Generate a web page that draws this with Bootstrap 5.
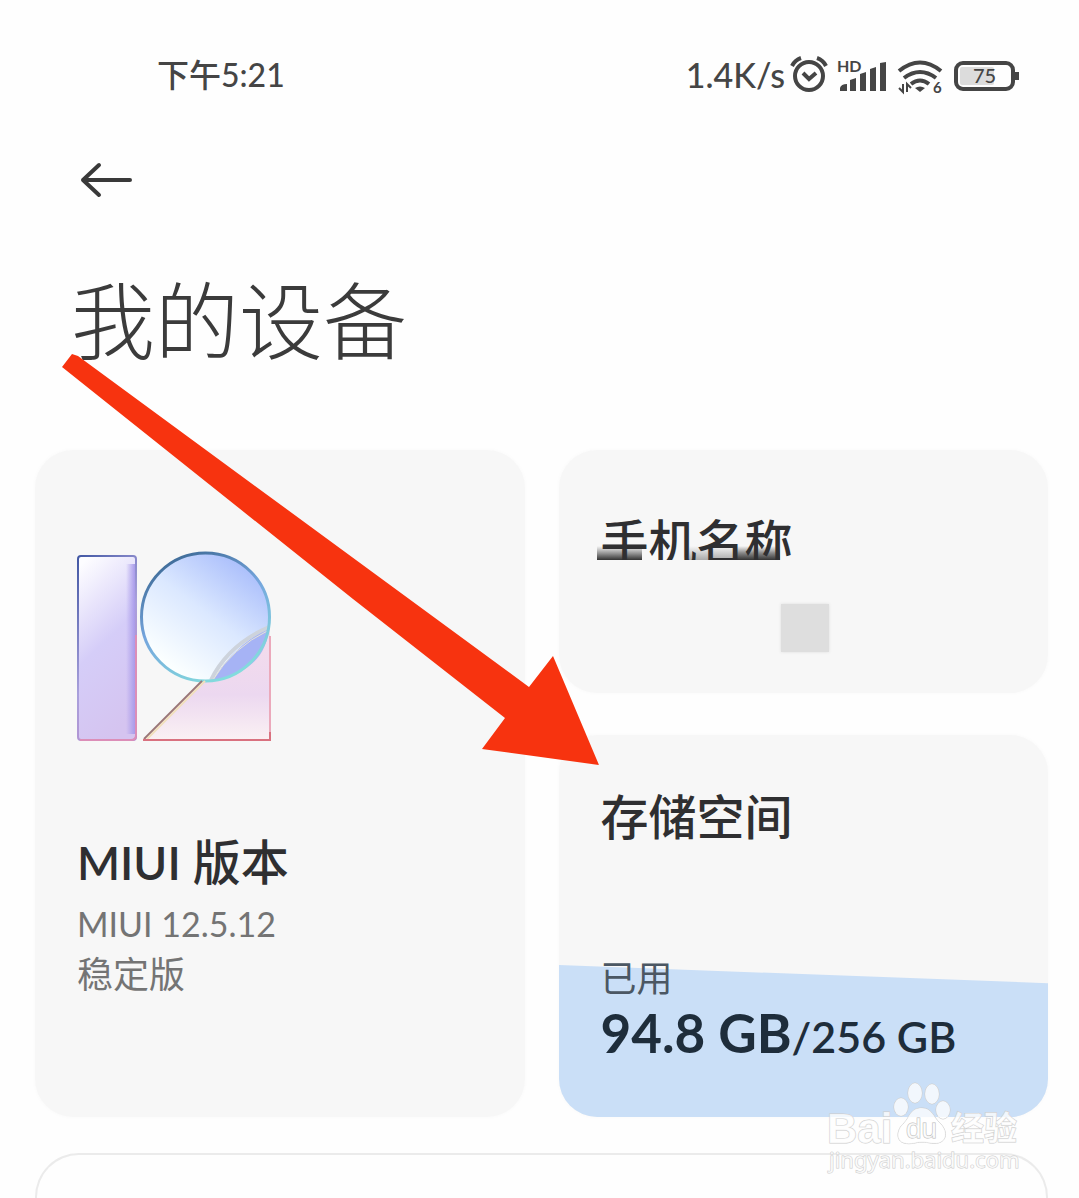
<!DOCTYPE html>
<html lang="zh-CN">
<head>
<meta charset="utf-8">
<meta name="viewport" content="width=device-width, initial-scale=1">
<title>我的设备</title>
<link href="https://cdn.jsdelivr.net/npm/bootstrap@5.3.0/dist/css/bootstrap.min.css" rel="stylesheet">
<style>
  body { background: #fefefe; color: #2f2f31; font-family: Lato, "Noto Sans CJK SC", sans-serif; }
  .device-page { padding: 0 31px 0 35px; overflow: hidden; }
  .status-bar { padding: 55px 27px 0 122px; font-size: 32px; line-height: 40px; color: #454545; font-weight: 500; }
  .status-bar svg { display: block; }
  .net-speed { font-size: 34px; }
  .back-btn { margin: 62px 0 0 41px; padding: 0; width: 58px; height: 44px; line-height: 0; }
  .page-title { margin: 68px 0 0 36px; font-size: 84px; line-height: 96px; font-weight: 300; font-family: "Noto Sans CJK SC", sans-serif; color: #3b3b3b; }
  .tiles { --bs-gutter-x: 34px; margin-top: 85px; }
  .tile-stack { gap: 42px; }
  .tile { border: 0; border-radius: 38px; background: #f7f7f7; box-shadow: 0 0 4px #f9f9f9; padding: 0 42px; }
  .tile-version { padding-top: 100px; }
  .tile-name { min-height: 243px; padding-top: 62px; }
  .tile-storage { min-height: 382px; padding-top: 52px; overflow: hidden; }
  .tile-title { font-size: 48px; line-height: 60px; font-weight: 500; margin: 0; }
  .tile-title .latin { font-size: 46px; font-weight: 600; }
  .tile-version .tile-title { margin-top: 89px; margin-bottom: 5px; }
  .tile-sub { font-size: 36px; line-height: 50px; color: #747474; margin: 0; }
  .tile-sub .latin { font-size: 34px; }
  .smear-title { position: relative; isolation: isolate; }
  .smear-title::before, .smear-title::after { content: ""; position: absolute; left: -4px; width: 200px; }
  .smear-title::before { z-index: -1; top: 34px; height: 14px;
    background:
      linear-gradient(#3330, #999 50%, #333) 0 0 / 45px 14px no-repeat,
      linear-gradient(#aaa0, #aaa) 92px 0 / 45px 14px no-repeat,
      linear-gradient(#3330, #888 50%, #333) 137px 0 / 46px 14px no-repeat; }
  .smear-title::after { top: 48px; height: 14px; background: #f7f7f7; }
  .name-mask { width: 48px; height: 48px; background: #dedede; margin: 32px 0 0 180px; box-shadow: 0 0 3px #dedede; }
  .used-fill { left: 0; right: 0; bottom: 0; height: 152px; background: #cadff7; clip-path: polygon(0 0, 100% 12%, 100% 100%, 0 100%); }
  .used-label { margin-top: 106px; font-size: 36px; line-height: 50px; color: #4b5763; }
  .used-value { font-size: 43px; line-height: 60px; font-weight: 600; color: #1e2d3b; }
  .used-value strong { font-size: 53px; font-weight: 700; }
  .next-panel { margin-top: 36px; min-height: 43px; border: 2px solid #ebebeb; border-bottom: 0; border-radius: 44px 44px 0 0; }
  .pointer-arrow { left: 55px; top: 345px; pointer-events: none; }
  .watermark { right: 51px; bottom: 18px; pointer-events: none; }
</style>
</head>
<body>
<main class="device-page position-relative d-flex flex-column min-vh-100">
  <header class="status-bar d-flex justify-content-between align-items-center">
    <span>下午5:21</span>
    <div class="d-flex align-items-center">
      <span class="net-speed">1.4K/s</span>
      <svg class="ms-1" width="40" height="40" viewBox="788 54 40 40" fill="none" stroke="#454545" stroke-width="4" role="img" aria-label="闹钟"><circle cx="808" cy="75" r="14"/><path d="M802 72l6 6 7-6M791 65q3-6 9-8M816 57q6 2 9 8" /></svg>
      <svg class="ms-2" width="52" height="40" viewBox="836 54 52 40" fill="#454545" role="img" aria-label="信号"><text x="836" y="71" font-size="16" font-weight="700">HD</text><path d="M839 90v-3q1-4 7-4v7zM849 90V79l6-2v13zM859 90V73l6-2v19zM869 90V68l6-2v24zM879 90V62l6-1v29z"/></svg>
      <svg class="ms-2" width="48" height="40" viewBox="896 54 48 40" fill="none" stroke="#454545" stroke-width="4" role="img" aria-label="无线网络"><path d="M898 70q21-17 42 0M903 77q16-12 32 0M910 83q9-7 18 0"/><path d="M914 87q5-3 10 0l-5 4z" fill="#454545" stroke="none"/><path d="M902 83v8l-4-4M906 91v-8l4 4" stroke-width="2"/><text x="932" y="92" font-size="15" font-weight="700" fill="#454545" stroke="none">6</text></svg>
      <svg class="ms-2" width="68" height="40" viewBox="954 54 68 40" fill="none" role="img" aria-label="电量 75"><rect x="957" y="62" width="57" height="26" rx="7" stroke="#454545" stroke-width="4"/><rect x="961" y="66" width="34" height="18" rx="2" fill="#dcdcdc"/><path d="M1018 71v8" stroke="#454545" stroke-width="4"/><text x="974" y="82" font-size="20" fill="#454545">75</text></svg>
    </div>
  </header>

  <button type="button" class="btn back-btn" aria-label="返回">
    <svg width="58" height="44" viewBox="78 158 58 44" fill="none" stroke="#393939" stroke-width="4" stroke-linecap="round" stroke-linejoin="round"><path d="M100 165L84 180l16 15M84 180h47"/></svg>
  </button>
  <h1 class="page-title">我的设备</h1>

  <div class="row tiles">
    <div class="col-6">
      <section class="card tile tile-version h-100">
        <svg width="197" height="193" viewBox="77 550 197 193" fill="none" aria-hidden="true">
          <defs>
            <linearGradient id="bar" x1=".2" y1="0" x2=".5" y2="1"><stop stop-color="#fdfdff"/><stop offset=".5" stop-color="#d5cdf8"/><stop offset="1" stop-color="#d5c4f0"/></linearGradient>
            <linearGradient id="barEdge" x1="0" y1="0" x2=".5" y2="1"><stop stop-color="#4258a4"/><stop offset=".6" stop-color="#a9a0dc"/><stop offset="1" stop-color="#b98bcc"/></linearGradient>
            <linearGradient id="disc" x1=".85" y1=".1" x2=".25" y2=".9"><stop stop-color="#a9bdfb"/><stop offset=".5" stop-color="#dbe8ff"/><stop offset="1" stop-color="#fbffff"/></linearGradient>
            <linearGradient id="discEdge" x1=".1" y1="0" x2=".6" y2="1"><stop stop-color="#35618b"/><stop offset=".5" stop-color="#75a5dd"/><stop offset="1" stop-color="#83dbdd"/></linearGradient>
            <linearGradient id="tri" x1=".6" y1="0" x2=".6" y2="1"><stop stop-color="#f5dceb"/><stop offset=".6" stop-color="#ecd8f0"/><stop offset="1" stop-color="#faf0f3"/></linearGradient>
            <linearGradient id="shade"><stop stop-color="#a99bea" stop-opacity="0"/><stop offset="1" stop-color="#a99bea"/></linearGradient>
          </defs>
          <rect x="78" y="556" width="58" height="184" rx="3" fill="url(#bar)"/>
          <rect x="126" y="564" width="9" height="170" fill="url(#shade)"/>
          <rect x="78" y="556" width="58" height="184" rx="3" stroke="url(#barEdge)" stroke-width="2"/>
          <path d="M136 635v100q0 5-5 5H80" stroke="#dc8eb8" stroke-width="2"/>
          <path d="M144 739L201 681Q240 675 270 628V739z" fill="url(#tri)"/>
          <circle cx="205.500" cy="617" r="64" fill="url(#disc)"/>
          <path d="M213 680Q232 648 269 627Q266 671 213 680z" fill="#a6b3f5"/>
          <path d="M211 680Q228 645 269 627" stroke="#cdd3dc" stroke-width="4"/>
          <path d="M213 680Q232 648 269 630" stroke="#e4e3d5" stroke-width="1"/>
          <circle cx="205.500" cy="617" r="64" stroke="url(#discEdge)" stroke-width="3"/>
          <path d="M144 739L202 681" stroke="#9b7778" stroke-width="2"/>
          <path d="M147 739L205 681" stroke="#f1e0bd" stroke-width="2"/>
          <path d="M270 636V739" stroke="#eba9bb" stroke-width="2"/>
          <path d="M143 740H270V732" stroke="#d9717f" stroke-width="2"/>
        </svg>
        <h2 class="tile-title"><span class="latin">MIUI</span> 版本</h2>
        <p class="tile-sub"><span class="latin">MIUI 12.5.12</span><br>稳定版</p>
      </section>
    </div>
    <div class="col-6 d-flex flex-column tile-stack">
      <section class="card tile tile-name">
        <h2 class="tile-title smear-title">手机名称</h2>
        <div class="name-mask"></div>
      </section>
      <section class="card tile tile-storage">
        <div class="used-fill position-absolute"></div>
        <h2 class="tile-title position-relative">存储空间</h2>
        <div class="used-label position-relative">已用</div>
        <div class="used-value position-relative"><strong>94.8 GB</strong>/256 GB</div>
      </section>
    </div>
  </div>

  <div class="next-panel flex-grow-1"></div>

  <svg class="pointer-arrow position-absolute" width="550" height="425" viewBox="55 345 550 425" aria-hidden="true"><path d="M62 367L72 354L78 356L529 687L553 656L599 765L482 749L505 718L353 599z" fill="#f7330f"/></svg>

  <svg class="watermark position-absolute" width="204" height="100" viewBox="824 1080 204 100" fill="#fff" fill-opacity=".75" stroke="#ccc" stroke-width="1" paint-order="stroke">
    <ellipse cx="901" cy="1107" rx="7" ry="9"/><ellipse cx="915" cy="1093" rx="7" ry="10"/><ellipse cx="932" cy="1094" rx="7" ry="10"/><ellipse cx="943" cy="1110" rx="7" ry="9"/>
    <path d="M922 1108c-12 0-12 9-18 15-8 7-8 18 0 20 7 2 12-1 18-1s13 3 19 0c7-4 5-13-1-19-7-6-8-15-18-15z"/>
    <text x="827" y="1143" font-size="42" font-weight="700" font-family="'Liberation Sans', sans-serif">Bai</text>
    <text x="906" y="1138" font-size="28" stroke="#bbb" font-family="'Liberation Sans', sans-serif">du</text>
    <text x="951" y="1140" font-size="33" font-weight="700" font-family="'Noto Sans CJK SC', sans-serif">经验</text>
    <text x="829" y="1168" font-size="22" font-family="'Noto Sans', sans-serif">jingyan.baidu.com</text>
  </svg>
</main>
<script src="https://cdn.jsdelivr.net/npm/bootstrap@5.3.0/dist/js/bootstrap.bundle.min.js"></script>
</body>
</html>
